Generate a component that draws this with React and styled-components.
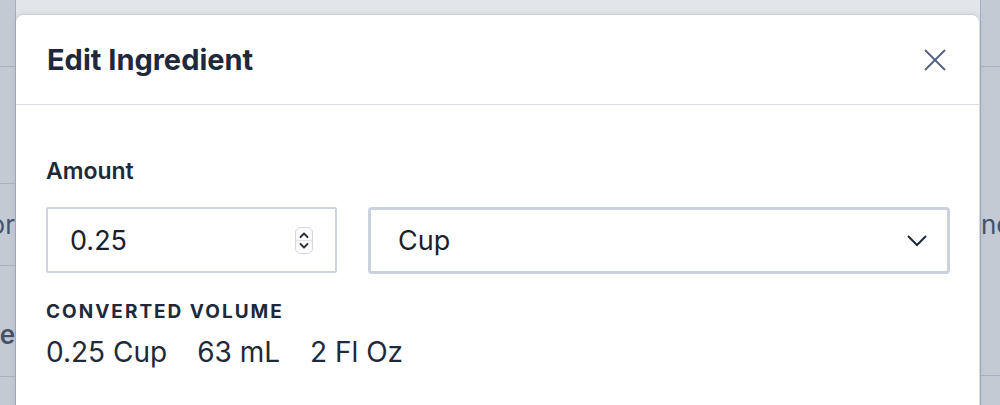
import styled, { createGlobalStyle } from "styled-components";

const Global = createGlobalStyle`
    html, body {
        margin: 0;
        padding: 0;
        width: 1000px;
        height: 405px;
        overflow: hidden;
        font-family: Inter, "Liberation Sans", sans-serif;
    }
`

const Page = styled.div`
    position: relative;
    display: grid;
    grid-template-columns: 16px 1fr 20px;
    width: 1000px;
    height: 405px;
    overflow: hidden;
`

const SideColumn = styled.div`
    background: #c4cad4;
    border-${props => props.side === 'left' ? 'right' : 'left'}: 1px solid #a4aec0;
    display: flex;
    flex-direction: column;
    overflow: hidden;
`

const SideCell = styled.div`
    height: ${props => props.h}px;
    box-sizing: border-box;
    flex-shrink: 0;
    border-bottom: ${props => props.noline ? 'none' : '1px solid #a8b1c1'};
    display: flex;
    align-items: ${props => props.pt !== undefined ? 'flex-start' : 'center'};
    padding-top: ${props => props.pt || 0}px;
    justify-content: ${props => props.align === 'left' ? 'flex-start' : 'flex-end'};
    font-size: 26px;
    line-height: 32px;
    color: #45526a;
    white-space: nowrap;
    overflow: hidden;
    font-weight: ${props => props.bold ? 600 : 400};
`

const Center = styled.div`
    background: #e2e5ea;
`

const Modal = styled.div`
    position: absolute;
    top: 15px;
    left: 16px;
    width: 963px;
    height: 420px;
    background: #fff;
    border-radius: 7px 7px 0 0;
    box-shadow: 0 -1px 0 #c9d0db, 0 0 6px rgba(60, 70, 90, 0.15);
    color: #1e293b;
`

const Header = styled.div`
    height: 89px;
    padding: 0 31px;
    display: flex;
    align-items: center;
    justify-content: space-between;
    border-bottom: 1px solid #d8dde5;
`

const Title = styled.h2`
    margin: 0;
    font-size: 29px;
    font-weight: 700;
    letter-spacing: 0;
`

const CloseButton = styled.button`
    border: none;
    background: none;
    padding: 0;
    display: flex;
    margin-right: 1px;
    color: #4f6080;
`

const Body = styled.div`
    padding: 52px 29px 0 30px;
`

const Label = styled.div`
    font-size: 23px;
    font-weight: 600;
    line-height: 28px;
    margin-bottom: 22px;
`

const Row = styled.div`
    display: grid;
    grid-template-columns: 1fr 2fr;
    gap: 31px;
`

const NumberBox = styled.div`
    height: 66px;
    box-sizing: border-box;
    border: 2px solid #ccd4df;
    border-radius: 2px;
    display: flex;
    align-items: center;
    justify-content: space-between;
    padding: 0 22px 0 22px;
    font-size: 27px;
    color: #1a1f2b;
`

const SelectBox = styled.div`
    height: 67px;
    box-sizing: border-box;
    border: 3px solid #cbd2dc;
    border-radius: 4px;
    display: flex;
    align-items: center;
    justify-content: space-between;
    padding: 0 19px 0 27px;
    font-size: 27px;
    color: #1a1f2b;
`

const SubLabel = styled.div`
    margin-top: 26px;
    font-size: 19px;
    font-weight: 700;
    letter-spacing: 2px;
    text-transform: uppercase;
    line-height: 24px;
`

const Values = styled.div`
    margin-top: 11px;
    display: flex;
    gap: 30px;
    font-size: 28px;
    line-height: 34px;
    color: #1e293b;
`

const Spinner = () => (
    <svg width="18" height="27" viewBox="0 0 18 27">
        <rect x="0.5" y="0.5" width="17" height="26" rx="5" fill="#fbfbfc" stroke="#d4d7dd"/>
        <line x1="1" y1="13.5" x2="17" y2="13.5" stroke="#e2e4e8"/>
        <path d="M5.5 10 L9 6.5 L12.5 10" fill="none" stroke="#2a2f38" strokeWidth="1.8" strokeLinecap="round" strokeLinejoin="round"/>
        <path d="M5.5 17 L9 20.5 L12.5 17" fill="none" stroke="#2a2f38" strokeWidth="1.8" strokeLinecap="round" strokeLinejoin="round"/>
    </svg>
)

const App = () => {
    return (
        <>
            <Global/>
            <Page>
                <SideColumn side="left">
                    <SideCell h={67} align="right"/>
                    <SideCell h={117} align="right"/>
                    <SideCell h={82} align="right">or</SideCell>
                    <SideCell h={111} align="right" bold pt={53}>e</SideCell>
                    <SideCell h={40} noline align="right"/>
                </SideColumn>
                <Center/>
                <SideColumn side="right">
                    <SideCell h={67} align="left"/>
                    <SideCell h={117} noline align="left"/>
                    <SideCell h={82} noline align="left">ne</SideCell>
                    <SideCell h={110} align="left"/>
                    <SideCell h={40} noline align="left"/>
                </SideColumn>

                <Modal>
                    <Header>
                        <Title>Edit Ingredient</Title>
                        <CloseButton aria-label="Close">
                            <svg width="24" height="24" viewBox="0 0 24 24">
                                <path d="M2 2 L22 22 M22 2 L2 22" stroke="currentColor" strokeWidth="1.8" fill="none"/>
                            </svg>
                        </CloseButton>
                    </Header>
                    <Body>
                        <Label>Amount</Label>
                        <Row>
                            <NumberBox>
                                <span>0.25</span>
                                <Spinner/>
                            </NumberBox>
                            <SelectBox>
                                <span>Cup</span>
                                <svg width="22" height="14" viewBox="0 0 22 14">
                                    <path d="M2 2 L11 11 L20 2" fill="none" stroke="#1e293b" strokeWidth="2"/>
                                </svg>
                            </SelectBox>
                        </Row>
                        <SubLabel>Converted Volume</SubLabel>
                        <Values>
                            <span>0.25 Cup</span>
                            <span>63 mL</span>
                            <span>2 Fl Oz</span>
                        </Values>
                    </Body>
                </Modal>
            </Page>
        </>
    )
}

export default App
